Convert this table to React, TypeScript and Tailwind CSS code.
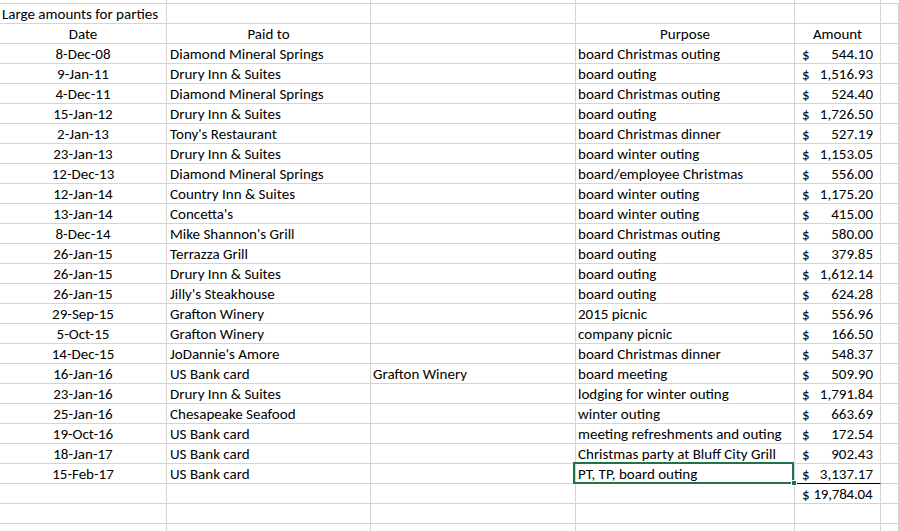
const rows: [string, string, string, string, string][] = [
  ['8-Dec-08', 'Diamond Mineral Springs', '', 'board Christmas outing', '544.10'],
  ['9-Jan-11', 'Drury Inn & Suites', '', 'board outing', '1,516.93'],
  ['4-Dec-11', 'Diamond Mineral Springs', '', 'board Christmas outing', '524.40'],
  ['15-Jan-12', 'Drury Inn & Suites', '', 'board outing', '1,726.50'],
  ['2-Jan-13', "Tony's Restaurant", '', 'board Christmas dinner', '527.19'],
  ['23-Jan-13', 'Drury Inn & Suites', '', 'board winter outing', '1,153.05'],
  ['12-Dec-13', 'Diamond Mineral Springs', '', 'board/employee Christmas', '556.00'],
  ['12-Jan-14', 'Country Inn & Suites', '', 'board winter outing', '1,175.20'],
  ['13-Jan-14', "Concetta's", '', 'board winter outing', '415.00'],
  ['8-Dec-14', "Mike Shannon's Grill", '', 'board Christmas outing', '580.00'],
  ['26-Jan-15', 'Terrazza Grill', '', 'board outing', '379.85'],
  ['26-Jan-15', 'Drury Inn & Suites', '', 'board outing', '1,612.14'],
  ['26-Jan-15', "Jilly's Steakhouse", '', 'board outing', '624.28'],
  ['29-Sep-15', 'Grafton Winery', '', '2015 picnic', '556.96'],
  ['5-Oct-15', 'Grafton Winery', '', 'company picnic', '166.50'],
  ['14-Dec-15', "JoDannie's Amore", '', 'board Christmas dinner', '548.37'],
  ['16-Jan-16', 'US Bank card', 'Grafton Winery', 'board meeting', '509.90'],
  ['23-Jan-16', 'Drury Inn & Suites', '', 'lodging for winter outing', '1,791.84'],
  ['25-Jan-16', 'Chesapeake Seafood', '', 'winter outing', '663.69'],
  ['19-Oct-16', 'US Bank card', '', 'meeting refreshments and outing', '172.54'],
  ['18-Jan-17', 'US Bank card', '', 'Christmas party at Bluff City Grill', '902.43'],
  ['15-Feb-17', 'US Bank card', '', 'PT, TP, board outing', '3,137.17'],
];

// one spreadsheet cell: 19px of content + 1px gridline right and bottom
const cell = 'h-[20px] shrink-0 border-r border-b border-[#d4d4d4] pt-[1px] leading-[19px] whitespace-nowrap';

function Blank() {
  return (
    <>
      <div className={`${cell} w-[167px]`} />
      <div className={`${cell} w-[204px]`} />
      <div className={`${cell} w-[205px]`} />
      <div className={`${cell} w-[219px]`} />
      <div className={`${cell} w-[86px]`} />
      <div className={`${cell} flex-1`} />
    </>
  );
}

function Money({ v, last }: { v: string; last?: boolean }) {
  return (
    <div
      className={`h-[20px] shrink-0 border-r border-b border-r-[#d4d4d4] w-[86px] flex justify-between pl-[7px] pr-[7px] pt-[1px] leading-[19px] ${
        last ? 'border-b-black' : 'border-b-[#d4d4d4]'
      }`}
    >
      <span>$</span>
      <span>{v}</span>
    </div>
  );
}

export default function App() {
  return (
    <div
      className="w-[899px] h-[531px] overflow-hidden bg-white text-black text-[15px]"
      style={{ fontFamily: 'Carlito, Lato, "Liberation Sans", sans-serif' }}
    >
      <div className="flex h-[4px] overflow-hidden">
        <div className="h-[4px] w-[167px] border-r border-b border-[#d4d4d4]" />
        <div className="h-[4px] w-[204px] border-r border-b border-[#d4d4d4]" />
        <div className="h-[4px] w-[205px] border-r border-b border-[#d4d4d4]" />
        <div className="h-[4px] w-[219px] border-r border-b border-[#d4d4d4]" />
        <div className="h-[4px] w-[86px] border-r border-b border-[#d4d4d4]" />
        <div className="h-[4px] flex-1 border-b border-[#d4d4d4]" />
      </div>

      <div className="flex">
        <div className={`${cell} w-[167px] pl-[2px]`}>Large amounts for parties</div>
        <div className={`${cell} w-[204px]`} />
        <div className={`${cell} w-[205px]`} />
        <div className={`${cell} w-[219px]`} />
        <div className={`${cell} w-[86px]`} />
        <div className={`${cell} flex-1`} />
      </div>

      <div className="flex">
        <div className={`${cell} w-[167px] text-center`}>Date</div>
        <div className={`${cell} w-[204px] text-center`}>Paid to</div>
        <div className={`${cell} w-[205px]`} />
        <div className={`${cell} w-[219px] text-center`}>Purpose</div>
        <div className={`${cell} w-[86px] text-center`}>Amount</div>
        <div className={`${cell} flex-1`} />
      </div>

      {rows.map((r, i) => {
        const last = i === rows.length - 1;
        return (
          <div className="flex" key={i}>
            <div className={`${cell} w-[167px] text-center`}>{r[0]}</div>
            <div className={`${cell} w-[204px] pl-[3px]`}>{r[1]}</div>
            <div className={`${cell} w-[205px] pl-[2px]`}>{r[2]}</div>
            <div className={`${cell} w-[219px] pl-[2px] relative`}>
              {r[3]}
              {last && (
                <>
                  {/* active cell outline + fill handle */}
                  <div className="absolute left-[-3px] top-[-2px] w-[221px] h-[22px] border-2 border-[#217346]" />
                  <div className="absolute left-[215px] top-[16px] w-[6px] h-[6px] bg-[#217346] border border-white" />
                </>
              )}
            </div>
            <Money v={r[4]} last={last} />
            <div className={`${cell} flex-1`} />
          </div>
        );
      })}

      <div className="flex">
        <div className={`${cell} w-[167px]`} />
        <div className={`${cell} w-[204px]`} />
        <div className={`${cell} w-[205px]`} />
        <div className={`${cell} w-[219px]`} />
        <div className={`${cell} w-[86px] flex gap-[4px] pl-[7px] tracking-[-0.2px]`}>
          <span>$</span>
          <span>19,784.04</span>
        </div>
        <div className={`${cell} flex-1`} />
      </div>

      <div className="flex">
        <Blank />
      </div>
      <div className="flex">
        <Blank />
      </div>
    </div>
  );
}
